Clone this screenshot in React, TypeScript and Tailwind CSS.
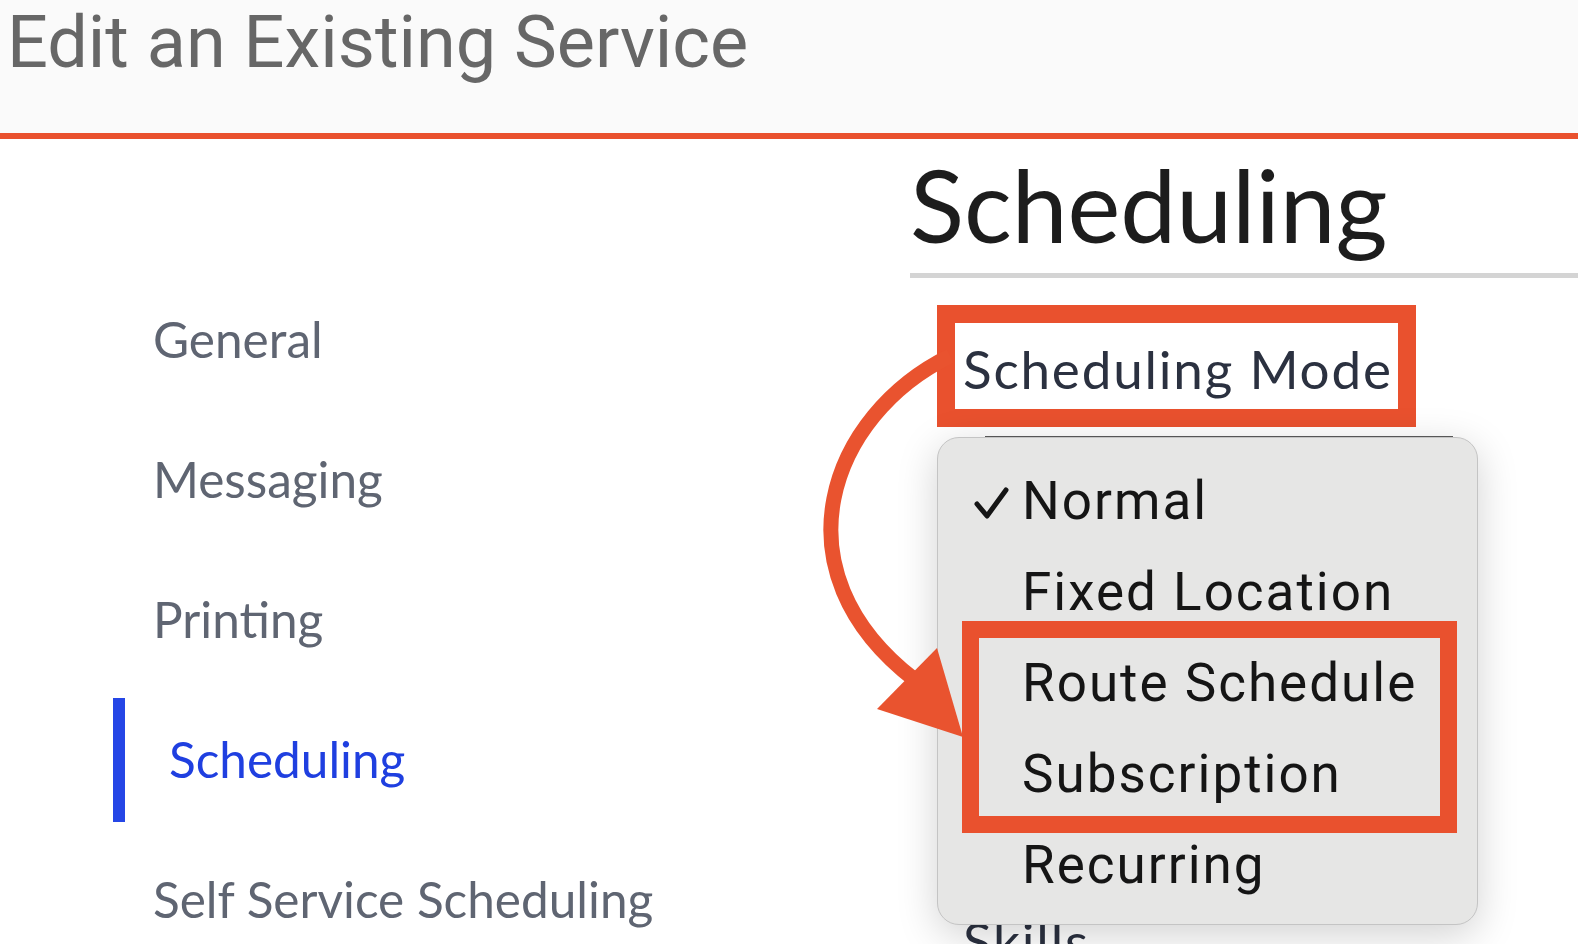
import React from 'react';

const geo = { fontFamily: 'Lato, "Noto Sans", sans-serif' };
const sys = { fontFamily: 'Roboto, "Liberation Sans", sans-serif' };

const navItems = ['General', 'Messaging', 'Printing', 'Scheduling', 'Self Service Scheduling'];
const modes = ['Normal', 'Fixed Location', 'Route Schedule', 'Subscription', 'Recurring'];

function Arrow() {
  return (
    <svg className="absolute left-0 top-0 pointer-events-none" width="1578" height="944" viewBox="0 0 1578 944">
      <path d="M 950 356 C 830 415, 772 570, 915 680" fill="none" stroke="#e9532f" strokeWidth="15" />
      <polygon points="877,709 937,648 963,737" fill="#e9532f" />
    </svg>
  );
}

export default function App() {
  return (
    <div className="relative w-[1578px] h-[944px] overflow-hidden bg-white">
      <header className="h-[139px] bg-[#fafafa] border-b-[6px] border-[#e9512e] pl-[7px]">
        <h1 className="text-[72px] leading-none text-[#676767] pt-[7px]" style={sys}>
          Edit an Existing Service
        </h1>
      </header>

      <div className="flex">
        <nav className="w-[910px] pl-[113px] pt-[131px]" style={geo}>
          {navItems.map((item) => {
            const active = item === 'Scheduling';
            return (
              <div key={item} className="h-[140px] flex items-center">
                {active ? (
                  <>
                    <div className="w-[12px] h-[124px] bg-[#2546e6]" />
                    <span className="ml-[44px] text-[49.5px] leading-none text-[#1f3fe0]">{item}</span>
                  </>
                ) : (
                  <span className="ml-[40px] text-[49.5px] leading-none text-[#5f6572]">{item}</span>
                )}
              </div>
            );
          })}
        </nav>

        <main className="relative flex-1 pt-[15px]" style={geo}>
          <h2 className="text-[100px] leading-none text-[#1d1d1d]">Scheduling</h2>
          <div className="mt-[19px] h-[5px] bg-[#d4d4d4]" />
          <div className="mt-[64px] ml-[53px] text-[53px] leading-none tracking-[1.8px] text-[#2b3140]">Scheduling Mode</div>
          <div className="mt-[519px] ml-[53px] text-[53px] leading-none tracking-[1.8px] text-[#2b3140]">Skills</div>

          {/* annotation around the label */}
          <div className="absolute left-[27px] top-[166px] w-[479px] h-[122px] border-[18px] border-[#e9512e]" />

          {/* open select menu */}
          <div className="absolute left-[75px] top-[297px] w-[468px] h-[3px] bg-[#5c5c5c]" />
          <div
            className="absolute left-[27px] top-[298px] w-[541px] h-[488px] rounded-[22px] bg-[#e6e6e5] border border-[#c4c4c4] shadow-[0_10px_40px_rgba(0,0,0,0.18)] pt-[18px]"
            style={sys}
          >
            {modes.map((m, i) => (
              <div key={m} className="relative h-[91px] leading-[91px] pl-[84px] text-[53px] tracking-[2px] text-[#151515]">
                {i === 0 && (
                  <svg className="absolute left-[36px] top-[31px]" width="36" height="34" viewBox="0 0 36 34">
                    <polyline points="3,17 13,29 32,3" fill="none" stroke="#151515" strokeWidth="5" strokeLinecap="round" strokeLinejoin="round" />
                  </svg>
                )}
                {m}
              </div>
            ))}
            <div className="absolute left-[24px] top-[183px] w-[495px] h-[212px] border-[17px] border-[#e9512e]" />
          </div>
        </main>
      </div>

      <Arrow />
    </div>
  );
}
